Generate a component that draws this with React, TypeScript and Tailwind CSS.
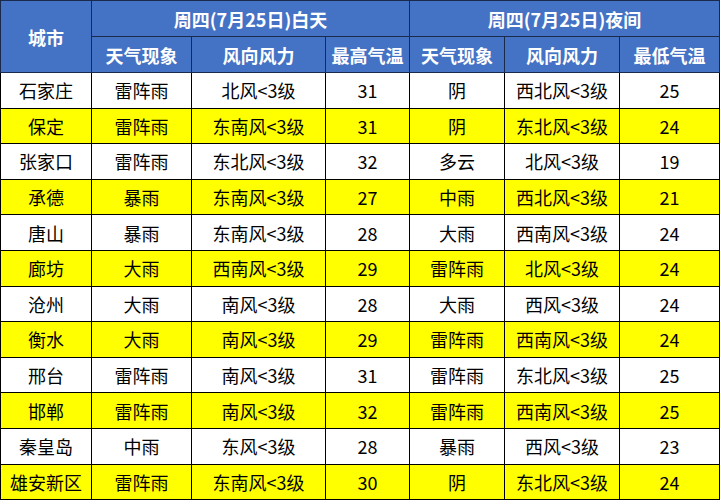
const rows = [
  ['石家庄', '雷阵雨', '北风<3级', '31', '阴', '西北风<3级', '25'],
  ['保定', '雷阵雨', '东南风<3级', '31', '阴', '东北风<3级', '24'],
  ['张家口', '雷阵雨', '东北风<3级', '32', '多云', '北风<3级', '19'],
  ['承德', '暴雨', '东南风<3级', '27', '中雨', '西北风<3级', '21'],
  ['唐山', '暴雨', '东南风<3级', '28', '大雨', '西南风<3级', '24'],
  ['廊坊', '大雨', '西南风<3级', '29', '雷阵雨', '北风<3级', '24'],
  ['沧州', '大雨', '南风<3级', '28', '大雨', '西风<3级', '24'],
  ['衡水', '大雨', '南风<3级', '29', '雷阵雨', '西南风<3级', '24'],
  ['邢台', '雷阵雨', '南风<3级', '31', '雷阵雨', '东北风<3级', '25'],
  ['邯郸', '雷阵雨', '南风<3级', '32', '雷阵雨', '西南风<3级', '25'],
  ['秦皇岛', '中雨', '东风<3级', '28', '暴雨', '西风<3级', '23'],
  ['雄安新区', '雷阵雨', '东南风<3级', '30', '阴', '东北风<3级', '24'],
]

const sub = ['天气现象', '风向风力', '最高气温', '天气现象', '风向风力', '最低气温']

export default function App() {
  return (
    <div className="w-[720px] h-[500px] bg-white" style={{ fontFamily: '"Noto Sans CJK SC", "Noto Sans", sans-serif' }}>
      <table className="table-fixed border-collapse w-[719px] text-[18px] leading-none">
        <colgroup>
          <col className="w-[91px]" />
          <col className="w-[100px]" />
          <col className="w-[134px]" />
          <col className="w-[84px]" />
          <col className="w-[95px]" />
          <col className="w-[115px]" />
          <col className="w-[100px]" />
        </colgroup>
        <thead className="bg-[#4472c4] text-white font-bold">
          <tr className="h-[36px]">
            <th rowSpan={2} className="border border-[#1a2a4d] text-center">城市</th>
            <th colSpan={3} className="border border-[#1a2a4d] text-center">周四(7月25日)白天</th>
            <th colSpan={3} className="border border-[#1a2a4d] text-center">周四(7月25日)夜间</th>
          </tr>
          <tr className="h-[36px]">
            {sub.map((s, i) => (
              <th key={i} className="border border-[#1a2a4d] text-center">{s}</th>
            ))}
          </tr>
        </thead>
        <tbody className="text-black">
          {rows.map((r, ri) => (
            <tr key={ri} className={ri % 2 === 1 ? 'h-[35.6px] bg-[#ffff00]' : 'h-[35.6px] bg-white'}>
              {r.map((c, ci) => (
                <td key={ci} className="border border-black text-center p-0">{c}</td>
              ))}
            </tr>
          ))}
        </tbody>
      </table>
    </div>
  )
}
